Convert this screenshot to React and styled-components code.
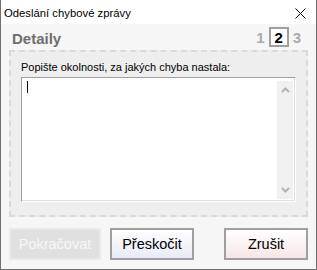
import React from "react";
import styled, { createGlobalStyle } from "styled-components";

const GlobalStyle = createGlobalStyle`
    html, body {
        margin: 0;
        padding: 0;
        background: #ffffff;
    }
    * {
        box-sizing: border-box;
    }
`;

const steps = [1, 2, 3];

const App = () => {
    return (
        <>
            <GlobalStyle />
            <Window>
                <TitleBar>
                    <Title>Odeslání chybové zprávy</Title>
                    <CloseButton>
                        <svg width="11" height="11" viewBox="0 0 11 11">
                            <path d="M0.5 0.5 L10.5 10.5 M10.5 0.5 L0.5 10.5" stroke="#000" strokeWidth="1" fill="none" />
                        </svg>
                    </CloseButton>
                </TitleBar>
                <Body>
                    <Header>
                        <Heading>Detaily</Heading>
                        <Steps>
                            {steps.map(step => (
                                <Step key={step} active={step === 2}>
                                    {step}
                                </Step>
                            ))}
                        </Steps>
                    </Header>
                    <Panel>
                        <Label>Popište okolnosti, za jakých chyba nastala:</Label>
                        <Field>
                            <Input>
                                <Caret />
                            </Input>
                            <Scrollbar>
                                <svg width="9" height="6" viewBox="0 0 9 6">
                                    <path d="M1 5 L4.5 1.5 L8 5" stroke="#b4b4b4" strokeWidth="2" fill="none" />
                                </svg>
                                <svg width="9" height="6" viewBox="0 0 9 6">
                                    <path d="M1 1 L4.5 4.5 L8 1" stroke="#b4b4b4" strokeWidth="2" fill="none" />
                                </svg>
                            </Scrollbar>
                        </Field>
                    </Panel>
                    <Footer>
                        <Button disabled>Pokračovat</Button>
                        <Button tint="#e8eaf6">Přeskočit</Button>
                        <Button tint="#f6e6e6" push>
                            Zrušit
                        </Button>
                    </Footer>
                </Body>
            </Window>
        </>
    );
};

const Window = styled.div`
    width: 317px;
    height: 270px;
    display: flex;
    flex-direction: column;
    border: 1px solid #6f6f6f;
    border-top: none;
    background: #f6f6f6;
    font-family: "Liberation Sans", Arial, sans-serif;
`;

const TitleBar = styled.div`
    height: 26px;
    display: flex;
    align-items: center;
    justify-content: space-between;
    padding: 0 10px 0 3px;
    background: #ffffff;
`;

const Title = styled.span`
    font-size: 11.3px;
    color: #000000;
    margin-top: 1px;
`;

const CloseButton = styled.span`
    display: flex;
    margin-top: 2px;
`;

const Body = styled.div`
    flex: 1;
    display: flex;
    flex-direction: column;
    padding: 0 8px 9px;
`;

const Header = styled.div`
    height: 26px;
    display: flex;
    align-items: center;
    justify-content: space-between;
    padding: 0 7px 0 3px;
`;

const Heading = styled.span`
    font-size: 15px;
    font-weight: bold;
    color: #6e6e6e;
    margin-top: 2px;
`;

const Steps = styled.div`
    display: flex;
    align-items: center;
    gap: 4px;
`;

const Step = styled.span`
    width: ${({ active }) => (active ? "20px" : "auto")};
    height: ${({ active }) => (active ? "20px" : "auto")};
    display: flex;
    align-items: center;
    justify-content: center;
    font-size: 15px;
    font-weight: bold;
    color: ${({ active }) => (active ? "#000000" : "#ababab")};
    ${({ active }) => active && `border: 2px solid #a0a0a0; background: #ffffff;`}
`;

const Panel = styled.div`
    height: 167px;
    display: flex;
    flex-direction: column;
    padding: 8px 10px 13px;
    border: 2px dashed #dadada;
    background: #eeeeee;
`;

const Label = styled.div`
    font-size: 11px;
    color: #000000;
    line-height: 15px;
    margin-bottom: 2px;
`;

const Field = styled.div`
    flex: 1;
    display: flex;
    padding: 3px 2px 2px 2px;
    background: #ffffff;
    border: 1px solid;
    border-color: #a0a0a0 #ffffff #ffffff #a0a0a0;
    box-shadow: inset -1px -1px 0 #e0e0e0;
`;

const Input = styled.div`
    flex: 1;
    padding: 0 0 0 3px;
`;

const Caret = styled.div`
    width: 1px;
    height: 12px;
    background: #000000;
`;

const Scrollbar = styled.div`
    width: 16px;
    display: flex;
    flex-direction: column;
    align-items: center;
    justify-content: space-between;
    padding: 6px 0 6px;
    background: #f0f0f0;
`;

const Footer = styled.div`
    display: flex;
    gap: 9px;
    margin-top: 11px;
`;

const Button = styled.button`
    height: 32px;
    padding: 0;
    width: ${({ disabled }) => (disabled ? "92px" : "84px")};
    margin-left: ${({ push }) => (push ? "auto" : "0")};
    font-family: "Liberation Sans", Arial, sans-serif;
    font-size: 14.5px;
    color: ${({ disabled }) => (disabled ? "#f7f7f7" : "#000000")};
    border: 2px solid ${({ disabled }) => (disabled ? "#e9e9e9" : "#9f9f9f")};
    background: ${({ disabled, tint }) => (disabled ? "#e0e0e0" : `linear-gradient(#ffffff, ${tint})`)};
`;

export default App;
